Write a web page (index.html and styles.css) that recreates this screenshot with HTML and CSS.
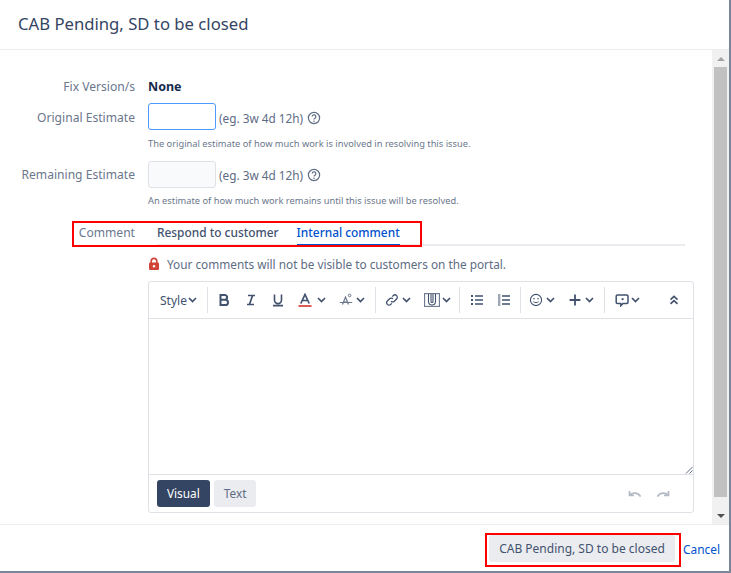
FILE: index.html
```html
<!DOCTYPE html>
<html lang="en">
<head>
<meta charset="utf-8">
<title>CAB Pending, SD to be closed</title>
<link rel="stylesheet" href="styles.css">
</head>
<body>
<svg class="defs" width="0" height="0" aria-hidden="true">
  <symbol id="chev" viewBox="0 0 9 6"><path d="M1 1l3.5 3.5L8 1" fill="none" stroke="currentColor" stroke-width="1.7"/></symbol>
  <symbol id="help" viewBox="0 0 14 14"><circle cx="7" cy="7" r="5.6" fill="none" stroke="currentColor" stroke-width="1.2"/><path d="M5.2 5.6a1.8 1.8 0 1 1 2.7 1.6c-.6.3-.9.6-.9 1.2" fill="none" stroke="currentColor" stroke-width="1.2"/><circle cx="7" cy="10.2" r=".8" fill="currentColor"/></symbol>
</svg>
<div class="dialog">
  <header class="head"><h2>CAB Pending, SD to be closed</h2></header>
  <div class="middle">
    <main class="content">
      <div class="row row-fix"><span class="label">Fix Version/s</span><strong class="none">None</strong></div>
      <div class="row row-est row-orig"><span class="label">Original Estimate</span><span class="input focus"></span><span class="hint">(eg. 3w 4d 12h)</span><svg class="help"><use href="#help"/></svg></div>
      <p class="desc desc-1">The original estimate of how much work is involved in resolving this issue.</p>
      <div class="row row-est"><span class="label">Remaining Estimate</span><span class="input"></span><span class="hint">(eg. 3w 4d 12h)</span><svg class="help"><use href="#help"/></svg></div>
      <p class="desc desc-2">An estimate of how much work remains until this issue will be resolved.</p>
      <div class="tabs">
        <span class="label tab-label">Comment</span>
        <div class="tablist"><span class="tab">Respond to customer</span><span class="tab active">Internal comment</span></div>
        <span class="mark mark-tabs"></span>
      </div>
      <div class="notice">
        <svg class="lock" viewBox="0 0 12 14"><path d="M3.2 6V4.2a2.8 2.8 0 0 1 5.6 0V6" fill="none" stroke="#d04437" stroke-width="1.6"/><rect x="1" y="5.5" width="10" height="7.5" rx="1.2" fill="#d04437"/><circle cx="6" cy="9.2" r="1.2" fill="#fff"/></svg>
        <span>Your comments will not be visible to customers on the portal.</span>
      </div>
      <section class="editor">
        <div class="toolbar">
          <div class="group g-style"><span class="style">Style</span><svg class="chev"><use href="#chev"/></svg></div>
          <div class="group g-text">
            <svg class="ti" viewBox="0 0 14 14"><path d="M3.5 2h4.2a2.4 2.4 0 0 1 0 4.8H3.5zM3.5 6.8h4.9a2.6 2.6 0 0 1 0 5.2H3.5z" fill="none" stroke="#42526e" stroke-width="2"/></svg>
            <svg class="ti" viewBox="0 0 14 14"><path d="M4 2.5h7M3 11.5h7M8.6 2.5l-3.2 9" fill="none" stroke="#42526e" stroke-width="1.7"/></svg>
            <svg class="ti" viewBox="0 0 14 14"><path d="M3.5 1.5v5.6a3.5 3.5 0 0 0 7 0V1.5M2 12.6h10" fill="none" stroke="#42526e" stroke-width="1.6"/></svg>
            <span class="pair pair-wide"><svg class="ti" viewBox="0 0 14 14"><path d="M2.8 10.5L7 1.5l4.2 9M4.3 7.5h5.4" fill="none" stroke="#42526e" stroke-width="1.7"/><path d="M0.5 13h13" stroke="#d9302a" stroke-width="1.6"/></svg><svg class="chev"><use href="#chev"/></svg></span>
            <span class="pair"><svg class="ti" viewBox="0 0 14 14"><path d="M3.5 11.5L6.5 4l3 7.5M4.6 9h3.8M.8 9.5h12.4" fill="none" stroke="#6b778c" stroke-width="1.2"/><circle cx="10.6" cy="2.4" r="1.3" fill="none" stroke="#6b778c"/></svg><svg class="chev"><use href="#chev"/></svg></span>
          </div>
          <div class="group g-link">
            <span class="pair"><svg class="ti" viewBox="0 0 14 14"><path d="M6 8.2a2.4 2.4 0 0 0 3.4 0l2.2-2.2A2.4 2.4 0 0 0 8.2 2.6l-1 1M8 5.8a2.4 2.4 0 0 0-3.4 0L2.4 8a2.4 2.4 0 0 0 3.4 3.4l1-1" fill="none" stroke="#42526e" stroke-width="1.3"/></svg><svg class="chev"><use href="#chev"/></svg></span>
            <span class="pair pair-tight"><svg class="ti ti-lg" viewBox="0 0 16 14"><rect x=".6" y=".6" width="14.8" height="12.8" fill="none" stroke="#6b778c" stroke-width="1.1"/><path d="M4.5 1v7.5a3.5 3.5 0 0 0 7 0V1M7 1v7.5a1 1 0 0 0 2 0V1" fill="none" stroke="#42526e" stroke-width="1.1"/></svg><svg class="chev"><use href="#chev"/></svg></span>
          </div>
          <div class="group g-list">
            <svg class="ti" viewBox="0 0 14 14"><path d="M5 3h8M5 7h8M5 11h8" stroke="#42526e" stroke-width="1.4"/><path d="M1 3h2M1 7h2M1 11h2" stroke="#42526e" stroke-width="1.8"/></svg>
            <svg class="ti" viewBox="0 0 14 14"><path d="M5 3h8M5 7h8M5 11h8" stroke="#42526e" stroke-width="1.5"/><path d="M1 2h2.4M1 4h2.4M1 6h2.4M1 8h2.4M1 10h2.4M1 12h2.4" stroke="#42526e" stroke-width="1"/></svg>
          </div>
          <div class="group g-insert">
            <span class="pair"><svg class="ti" viewBox="0 0 14 14"><circle cx="7" cy="7" r="5.6" fill="none" stroke="#42526e" stroke-width="1.1"/><circle cx="5" cy="5.7" r=".8" fill="#42526e"/><circle cx="9" cy="5.7" r=".8" fill="#42526e"/><path d="M4.4 8.6c1.2 1.4 4 1.4 5.2 0" fill="none" stroke="#42526e" stroke-width="1"/></svg><svg class="chev"><use href="#chev"/></svg></span>
            <span class="pair"><svg class="ti" viewBox="0 0 14 14"><path d="M7 1.6v10.8M1.6 7h10.8" stroke="#42526e" stroke-width="1.8"/></svg><svg class="chev"><use href="#chev"/></svg></span>
          </div>
          <div class="group g-last">
            <span class="pair pair-tight"><svg class="ti" viewBox="0 0 14 14"><path d="M2.4 2h9.4a1.2 1.2 0 0 1 1.2 1.2v6a1.2 1.2 0 0 1-1.2 1.2H8l-2.2 2.4v-2.4H2.4a1.2 1.2 0 0 1-1.2-1.2v-6A1.2 1.2 0 0 1 2.4 2z" fill="none" stroke="#42526e" stroke-width="1.5"/><circle cx="7.6" cy="6.2" r="1.1" fill="#42526e"/></svg><svg class="chev"><use href="#chev"/></svg></span>
            <svg class="ti collapse" viewBox="0 0 10 10"><path d="M1.5 4.6L5 1.4l3.5 3.2M1.5 8.8L5 5.6l3.5 3.2" fill="none" stroke="#42526e" stroke-width="1.6"/></svg>
          </div>
        </div>
        <div class="area">
          <svg class="grip" viewBox="0 0 8 8"><path d="M7.5 1L1 7.5M7.5 4.5L4.5 7.5" stroke="#5e6c84"/></svg>
        </div>
        <div class="modes">
          <span class="mode on">Visual</span><span class="mode">Text</span>
          <span class="undo">
            <svg class="ur" viewBox="0 0 14 8"><path d="M1.5 1v4.5H6M1.8 5.2C4 2.6 9.5 1.6 12.6 6.6" fill="none" stroke="#b3bac5" stroke-width="1.7"/></svg>
            <svg class="ur flip" viewBox="0 0 14 8"><path d="M1.5 1v4.5H6M1.8 5.2C4 2.6 9.5 1.6 12.6 6.6" fill="none" stroke="#b3bac5" stroke-width="1.7"/></svg>
          </span>
        </div>
      </section>
    </main>
    <div class="scrollbar" aria-hidden="true">
      <span class="arrow up"></span>
      <span class="thumb"></span>
      <span class="arrow down"></span>
    </div>
  </div>
  <footer class="foot">
    <span class="submit-wrap"><button class="submit" type="button">CAB Pending, SD to be closed</button></span>
    <a class="cancel" href="#">Cancel</a>
  </footer>
</div>
</body>
</html>
```
FILE: styles.css
```css
* { box-sizing: border-box; }
html, body { margin: 0; height: 100%; }
body {
  background: #7a869a;
  font-family: "Noto Sans", "Open Sans", sans-serif;
  font-size: 12px;
  color: #42526e;
  overflow: hidden;
}
.defs { position: absolute; }
.dialog {
  width: 729px;
  height: 571px;
  background: #fff;
  display: flex;
  flex-direction: column;
}
.head {
  height: 50px;
  flex: none;
  padding: 0 18px 2px;
  display: flex;
  align-items: center;
  border-bottom: 1px solid #ebecf0;
}
.head h2 { margin: 0; font-size: 16.7px; font-weight: 400; color: #344563; }
.middle { flex: 1; display: flex; min-height: 0; }
.content { flex: 1; padding: 27px 18px 0 0; min-width: 0; }
.row { display: flex; align-items: center; }
.label {
  width: 135px;
  flex: none;
  text-align: right;
  color: #6b778c;
  font-size: 12.1px;
  margin-right: 13px;
}
.row-fix { height: 19px; margin-bottom: 7px; }
.none { font-weight: 700; font-size: 12.5px; color: #172b4d; }
.row-est { height: 27px; }
.row-orig .label { padding-top: 1px; }
.row-orig .hint { padding-top: 2px; }
.row-orig .help { margin-top: 2px; }
.input {
  width: 68px;
  height: 27px;
  border: 1px solid #dfe1e6;
  background: #f9fafb;
  border-radius: 3px;
  margin-right: 3px;
}
.input.focus { border-color: #4c9aff; background: #fff; }
.hint { font-size: 11.8px; color: #5e6c84; }
.help { width: 14px; height: 14px; margin-left: 4px; color: #5e6c84; }
.desc { margin: 0 0 0 148px; font-size: 9.3px; line-height: 14px; color: #6b778c; }
.desc-1 { margin-top: 7px; margin-bottom: 10px; }
.desc-2 { margin-top: 6px; }
.tabs { position: relative; display: flex; height: 24px; margin-top: 13px; margin-right: 9px; }
.tab-label { margin-right: 0; width: 135px; height: 24px; line-height: 23px; }
.tablist {
  flex: 1;
  display: flex;
  gap: 18px;
  margin-left: 22px;
  border-bottom: 2px solid #ebecf0;
  height: 26px;
  margin-top: -1px;
}
.tab { line-height: 24px; font-size: 11.9px; color: #42526e; height: 26px; font-weight: 500; }
.tab.active { color: #0052cc; border-bottom: 2px solid #0052cc; }
.mark { position: absolute; border: 2px solid #f00; pointer-events: none; }
.mark-tabs { left: 72px; top: 0; width: 350px; height: 26px; }
.notice { margin: 10px 0 0 148px; display: flex; align-items: center; height: 18px; gap: 7px; font-size: 11.8px; color: #5e6c84; }
.lock { width: 12px; height: 14px; flex: none; }
.editor {
  margin: 8px 0 0 148px;
  width: 546px;
  height: 232px;
  border: 1px solid #dfe1e6;
  border-radius: 3px;
  display: flex;
  flex-direction: column;
}
.toolbar { height: 37px; flex: none; display: flex; align-items: center; border-bottom: 1px solid #dfe1e6; }
.group { display: flex; align-items: center; height: 26px; }
.group + .group { border-left: 1px solid #dfe1e6; }
.style { font-size: 12px; color: #42526e; }
.chev { width: 9px; height: 6px; color: #42526e; flex: none; }
.g-style { width: 58px; padding-left: 11px; gap: 1px; }
.g-text { width: 168px; padding-left: 9px; gap: 13px; }
.g-link { width: 84px; padding-left: 9px; gap: 13px; }
.g-list { width: 61px; padding-left: 10px; gap: 13px; }
.g-insert { width: 84px; padding-left: 8px; gap: 13px; }
.g-last { flex: 1; padding-left: 10px; justify-content: space-between; padding-right: 14px; }
.ti { width: 14px; height: 14px; flex: none; }
.ti-lg { width: 16px; height: 14px; }
.collapse { width: 10px; height: 10px; }
.pair { display: flex; align-items: center; gap: 3px; }
.pair-wide { gap: 5px; }
.pair-tight { gap: 2px; }
.area { flex: 1; position: relative; border-bottom: 1px solid #dfe1e6; }
.grip { position: absolute; right: 0; bottom: 0; width: 8px; height: 8px; }
.modes { height: 37px; flex: none; display: flex; align-items: center; padding-left: 8px; gap: 4px; }
.mode {
  height: 27px;
  line-height: 27px;
  padding: 0 10px;
  background: #ebecf0;
  border-radius: 3px;
  color: #5e6c84;
  font-size: 11.8px;
}
.mode.on { background: #344563; color: #fff; }
.undo { margin-left: auto; display: flex; gap: 14px; padding-right: 23px; }
.ur { width: 14px; height: 8px; }
.flip { transform: scaleX(-1); }
.scrollbar { width: 17px; flex: none; background: #f1f1f1; display: flex; flex-direction: column; align-items: center; }
.arrow { flex: none; width: 0; height: 0; border-left: 4px solid transparent; border-right: 4px solid transparent; }
.arrow.up { border-bottom: 4px solid #a3a3a3; margin: 7px 0 6px; }
.arrow.down { border-top: 4px solid #505050; margin: auto 0 6px; }
.thumb { flex: none; height: 430px; width: 13px; background: #c1c1c1; }
.foot {
  flex: none;
  height: 47px;
  border-top: 1px solid #ebecf0;
  display: flex;
  align-items: flex-start;
  justify-content: flex-end;
  padding: 8px 9px 0 0;
  gap: 2px;
}
.submit-wrap { border: 2px solid #f00; padding: 0 4px 0 2px; height: 34px; display: block; }
.submit {
  display: block;
  width: 186px;
  height: 27px;
  border: 0;
  background: #ebecf0;
  border-radius: 3px;
  color: #42526e;
  font: 12px "Noto Sans", "Open Sans", sans-serif;
  padding: 0;
}
.cancel { color: #0052cc; text-decoration: none; font-size: 11.9px; line-height: 32px; }
```
